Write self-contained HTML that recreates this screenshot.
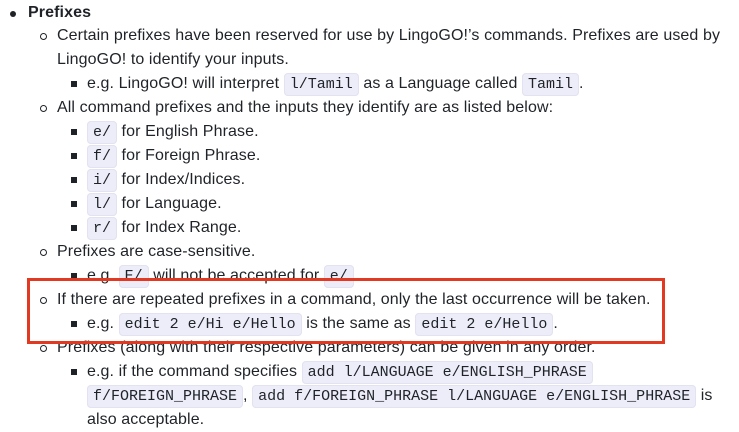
<!DOCTYPE html>
<html><head><meta charset="utf-8"><style>
body{margin:0;width:739px;height:430px;background:#fff;overflow:hidden;font-family:"Liberation Sans",sans-serif;font-size:16px;letter-spacing:0.1px;color:#1f2328;position:relative}
.w{position:absolute;left:0;top:2px;width:739px;height:430px}
.l{position:absolute;white-space:nowrap;line-height:24px}
code{font-family:"Liberation Mono",monospace;font-size:15px;letter-spacing:0;background:#ededf9;border-radius:4px;padding:2px 5px;border:1px solid #e2e2f0}
.b1,.b2,.b3{position:absolute}
.b1{width:6px;height:6px;border-radius:50%;background:#1f2328}
.b2{width:5px;height:5px;border-radius:50%;border:1.3px solid #1f2328}
.b3{width:6px;height:6px;background:#1f2328}
#box{position:absolute;left:27px;top:278px;width:632px;height:60px;border:3.5px solid #e23a22}
</style></head><body><div class="w">
<div class="b1" style="left:10px;top:9px"></div><div class="l" style="left:28px;top:-1px;font-weight:bold">Prefixes</div>

<div class="b2" style="left:40px;top:31px"></div><div class="l" style="left:57px;top:22px">Certain prefixes have been reserved for use by LingoGO!’s commands. Prefixes are used by</div>
<div class="l" style="left:57px;top:46px">LingoGO! to identify your inputs.</div>
<div class="b3" style="left:71px;top:79px"></div><div class="l" style="left:87px;top:70px">e.g. LingoGO! will interpret <code>l/Tamil</code> as a Language called <code>Tamil</code>.</div>

<div class="b2" style="left:40px;top:103px"></div><div class="l" style="left:57px;top:94px">All command prefixes and the inputs they identify are as listed below:</div>
<div class="b3" style="left:71px;top:127px"></div><div class="l" style="left:87px;top:118px"><code>e/</code> for English Phrase.</div>
<div class="b3" style="left:71px;top:151px"></div><div class="l" style="left:87px;top:142px"><code>f/</code> for Foreign Phrase.</div>
<div class="b3" style="left:71px;top:175px"></div><div class="l" style="left:87px;top:166px"><code>i/</code> for Index/Indices.</div>
<div class="b3" style="left:71px;top:199px"></div><div class="l" style="left:87px;top:190px"><code>l/</code> for Language.</div>
<div class="b3" style="left:71px;top:223px"></div><div class="l" style="left:87px;top:214px"><code>r/</code> for Index Range.</div>

<div class="b2" style="left:40px;top:247px"></div><div class="l" style="left:57px;top:238px">Prefixes are case-sensitive.</div>
<div class="b3" style="left:71px;top:271px"></div><div class="l" style="left:87px;top:262px">e.g. <code>E/</code> will not be accepted for <code>e/</code>.</div>

<div class="b2" style="left:40px;top:295px"></div><div class="l" style="left:57px;top:286px">If there are repeated prefixes in a command, only the last occurrence will be taken.</div>
<div class="b3" style="left:71px;top:319px"></div><div class="l" style="left:87px;top:310px">e.g. <code>edit 2 e/Hi e/Hello</code> is the same as <code>edit 2 e/Hello</code>.</div>

<div class="b2" style="left:40px;top:343px"></div><div class="l" style="left:57px;top:334px">Prefixes (along with their respective parameters) can be given in any order.</div>
<div class="b3" style="left:71px;top:367px"></div><div class="l" style="left:87px;top:358px">e.g. if the command specifies <code>add l/LANGUAGE e/ENGLISH_PHRASE</code></div>
<div class="l" style="left:87px;top:382px"><code>f/FOREIGN_PHRASE</code>, <code>add f/FOREIGN_PHRASE l/LANGUAGE e/ENGLISH_PHRASE</code> is</div>
<div class="l" style="left:87px;top:406px">also acceptable.</div>
</div>
<div id="box"></div>
</body></html>
